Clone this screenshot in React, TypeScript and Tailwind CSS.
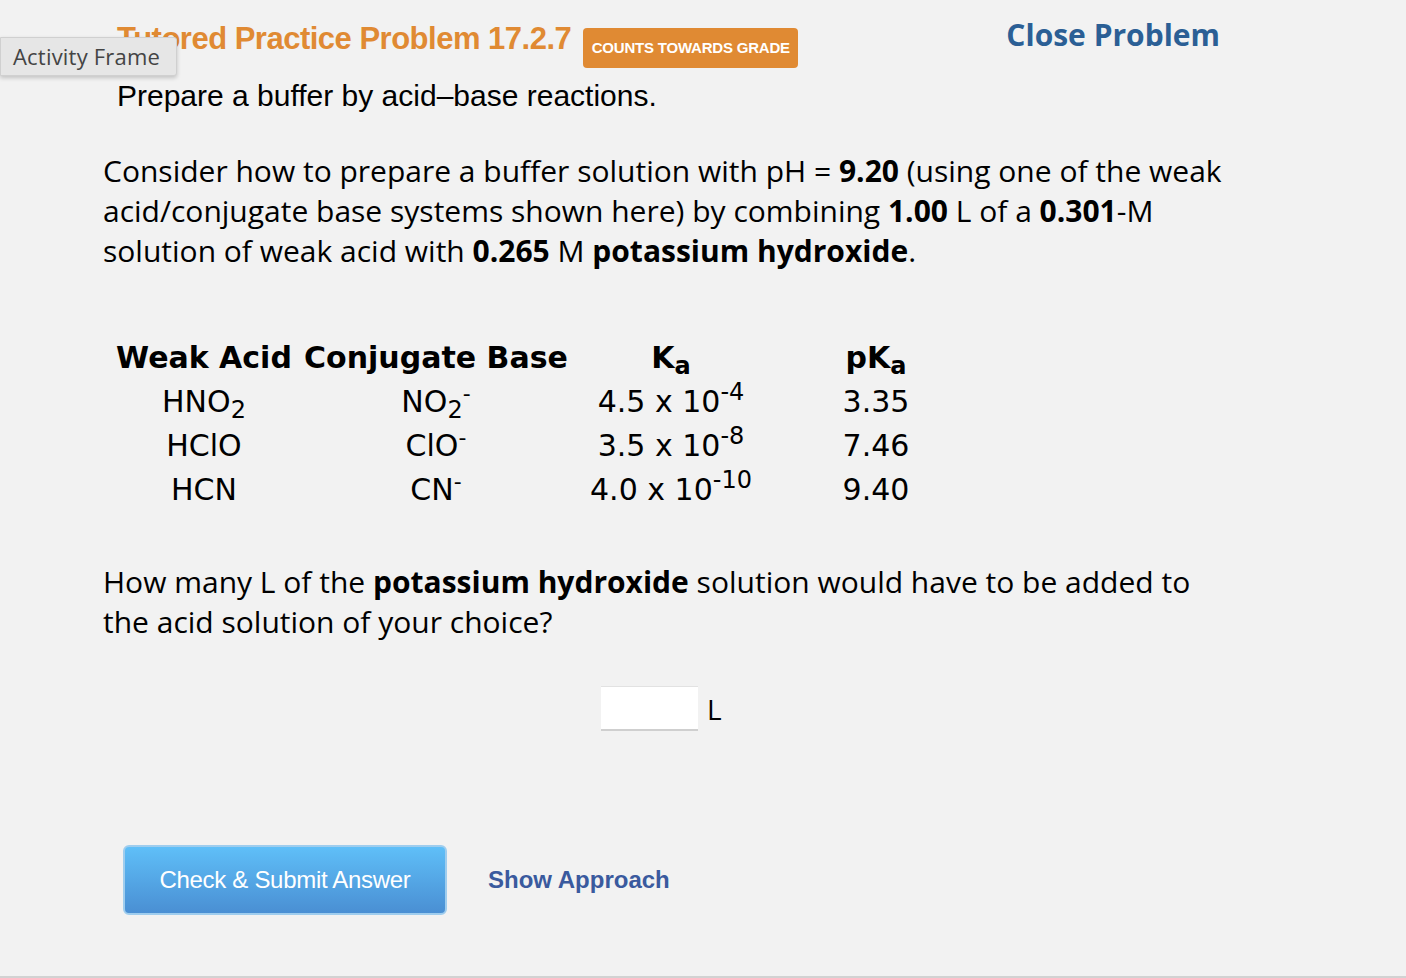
export default function App() {
  const rows = [
    { acid: <>HNO<sub className="text-[24px]">2</sub></>, base: <>NO<sub className="text-[24px]">2</sub><sup className="text-[22px]">-</sup></>, ka: <>4.5 x 10<sup className="text-[24px]">-4</sup></>, pka: "3.35" },
    { acid: <>HClO</>, base: <>ClO<sup className="text-[22px]">-</sup></>, ka: <>3.5 x 10<sup className="text-[24px]">-8</sup></>, pka: "7.46" },
    { acid: <>HCN</>, base: <>CN<sup className="text-[22px]">-</sup></>, ka: <>4.0 x 10<sup className="text-[24px]">-10</sup></>, pka: "9.40" },
  ];

  return (
    <div className="relative h-[978px] w-full overflow-hidden border-b-2 border-[#d2d2d2] bg-[#f2f2f2] text-black">
      {/* floating tab */}
      <div className="absolute left-0 top-[37px] z-10 flex h-[39px] w-[177px] items-center rounded-r-[3px] border border-[#d0d0d0] bg-[#e6e6e6] pl-[12px] text-[22px] tracking-[0.2px] text-[#444] shadow-[0_2px_4px_rgba(0,0,0,0.2)] [font-family:'Open_Sans',sans-serif]">
        Activity Frame
      </div>

      <div className="flex w-[1220px] items-start justify-between pl-[117px] pt-[20px]">
        <div className="flex items-start gap-[12px]">
          <h1 className="text-[31px] font-bold leading-[38px] tracking-[-0.5px] text-[#e08a33] [font-family:'Liberation_Sans',sans-serif]">
            Tutored Practice Problem 17.2.7
          </h1>
          <span className="mt-[8px] flex h-[40px] w-[215px] items-center justify-center rounded-[4px] bg-[#e08a33] text-[15px] font-bold tracking-[-0.2px] text-white [font-family:'Liberation_Sans',sans-serif]">
            COUNTS TOWARDS GRADE
          </span>
        </div>
        <a className="mt-[-4px] text-[30px] font-bold leading-[38px] text-[#2b5f95] [font-family:'Open_Sans',sans-serif]">
          Close Problem
        </a>
      </div>

      <p className="mt-[10px] pl-[117px] text-[30px] leading-[36px] [font-family:'Liberation_Sans',sans-serif]">
        Prepare a buffer by acid–base reactions.
      </p>

      <div className="mt-[37px] pl-[103px] text-[30px] leading-[40px] [font-family:'Open_Sans',sans-serif]">
        <p>
          Consider how to prepare a buffer solution with pH = <b>9.20</b> (using one of the weak
          <br />
          acid/conjugate base systems shown here) by combining <b>1.00</b> L of a <b>0.301</b>-M
          <br />
          solution of weak acid with <b>0.265</b> M <b>potassium hydroxide</b>.
        </p>
      </div>

      <div className="mt-[65px] pl-[104px] text-[30px] [font-family:'DejaVu_Sans',sans-serif]">
        <div className="grid grid-cols-[200px_264px_206px_204px] text-center leading-[44px]">
          <div className="font-bold">Weak Acid</div>
          <div className="font-bold">Conjugate Base</div>
          <div className="font-bold">
            K<sub className="text-[24px]">a</sub>
          </div>
          <div className="font-bold">
            pK<sub className="text-[24px]">a</sub>
          </div>
          {rows.map((r, i) => (
            <div key={i} className="contents">
              <div>{r.acid}</div>
              <div>{r.base}</div>
              <div>{r.ka}</div>
              <div>{r.pka}</div>
            </div>
          ))}
        </div>
      </div>

      <p className="mt-[50px] pl-[103px] text-[30px] leading-[40px] [font-family:'Open_Sans',sans-serif]">
        How many L of the <b>potassium hydroxide</b> solution would have to be added to
        <br />
        the acid solution of your choice?
      </p>

      <div className="mt-[44px] flex items-center pl-[601px]">
        <input
          type="text"
          className="h-[45px] w-[97px] border-t border-b-2 border-t-[#e2e2e2] border-b-[#cfcfcf] bg-white outline-none"
        />
        <span className="ml-[9px] text-[28px] [font-family:'Open_Sans',sans-serif]">L</span>
      </div>

      <div className="mt-[114px] flex items-center pl-[123px]">
        <button className="h-[70px] w-[324px] rounded-[6px] border-2 border-[#9fcdee] bg-gradient-to-b from-[#5fbff8] to-[#4a8fd3] text-[24px] tracking-[-0.3px] text-white [font-family:'Liberation_Sans',sans-serif]">
          Check &amp; Submit Answer
        </button>
        <a className="ml-[41px] text-[24px] font-bold text-[#3a5a9e] [font-family:'Liberation_Sans',sans-serif]">
          Show Approach
        </a>
      </div>
    </div>
  );
}
